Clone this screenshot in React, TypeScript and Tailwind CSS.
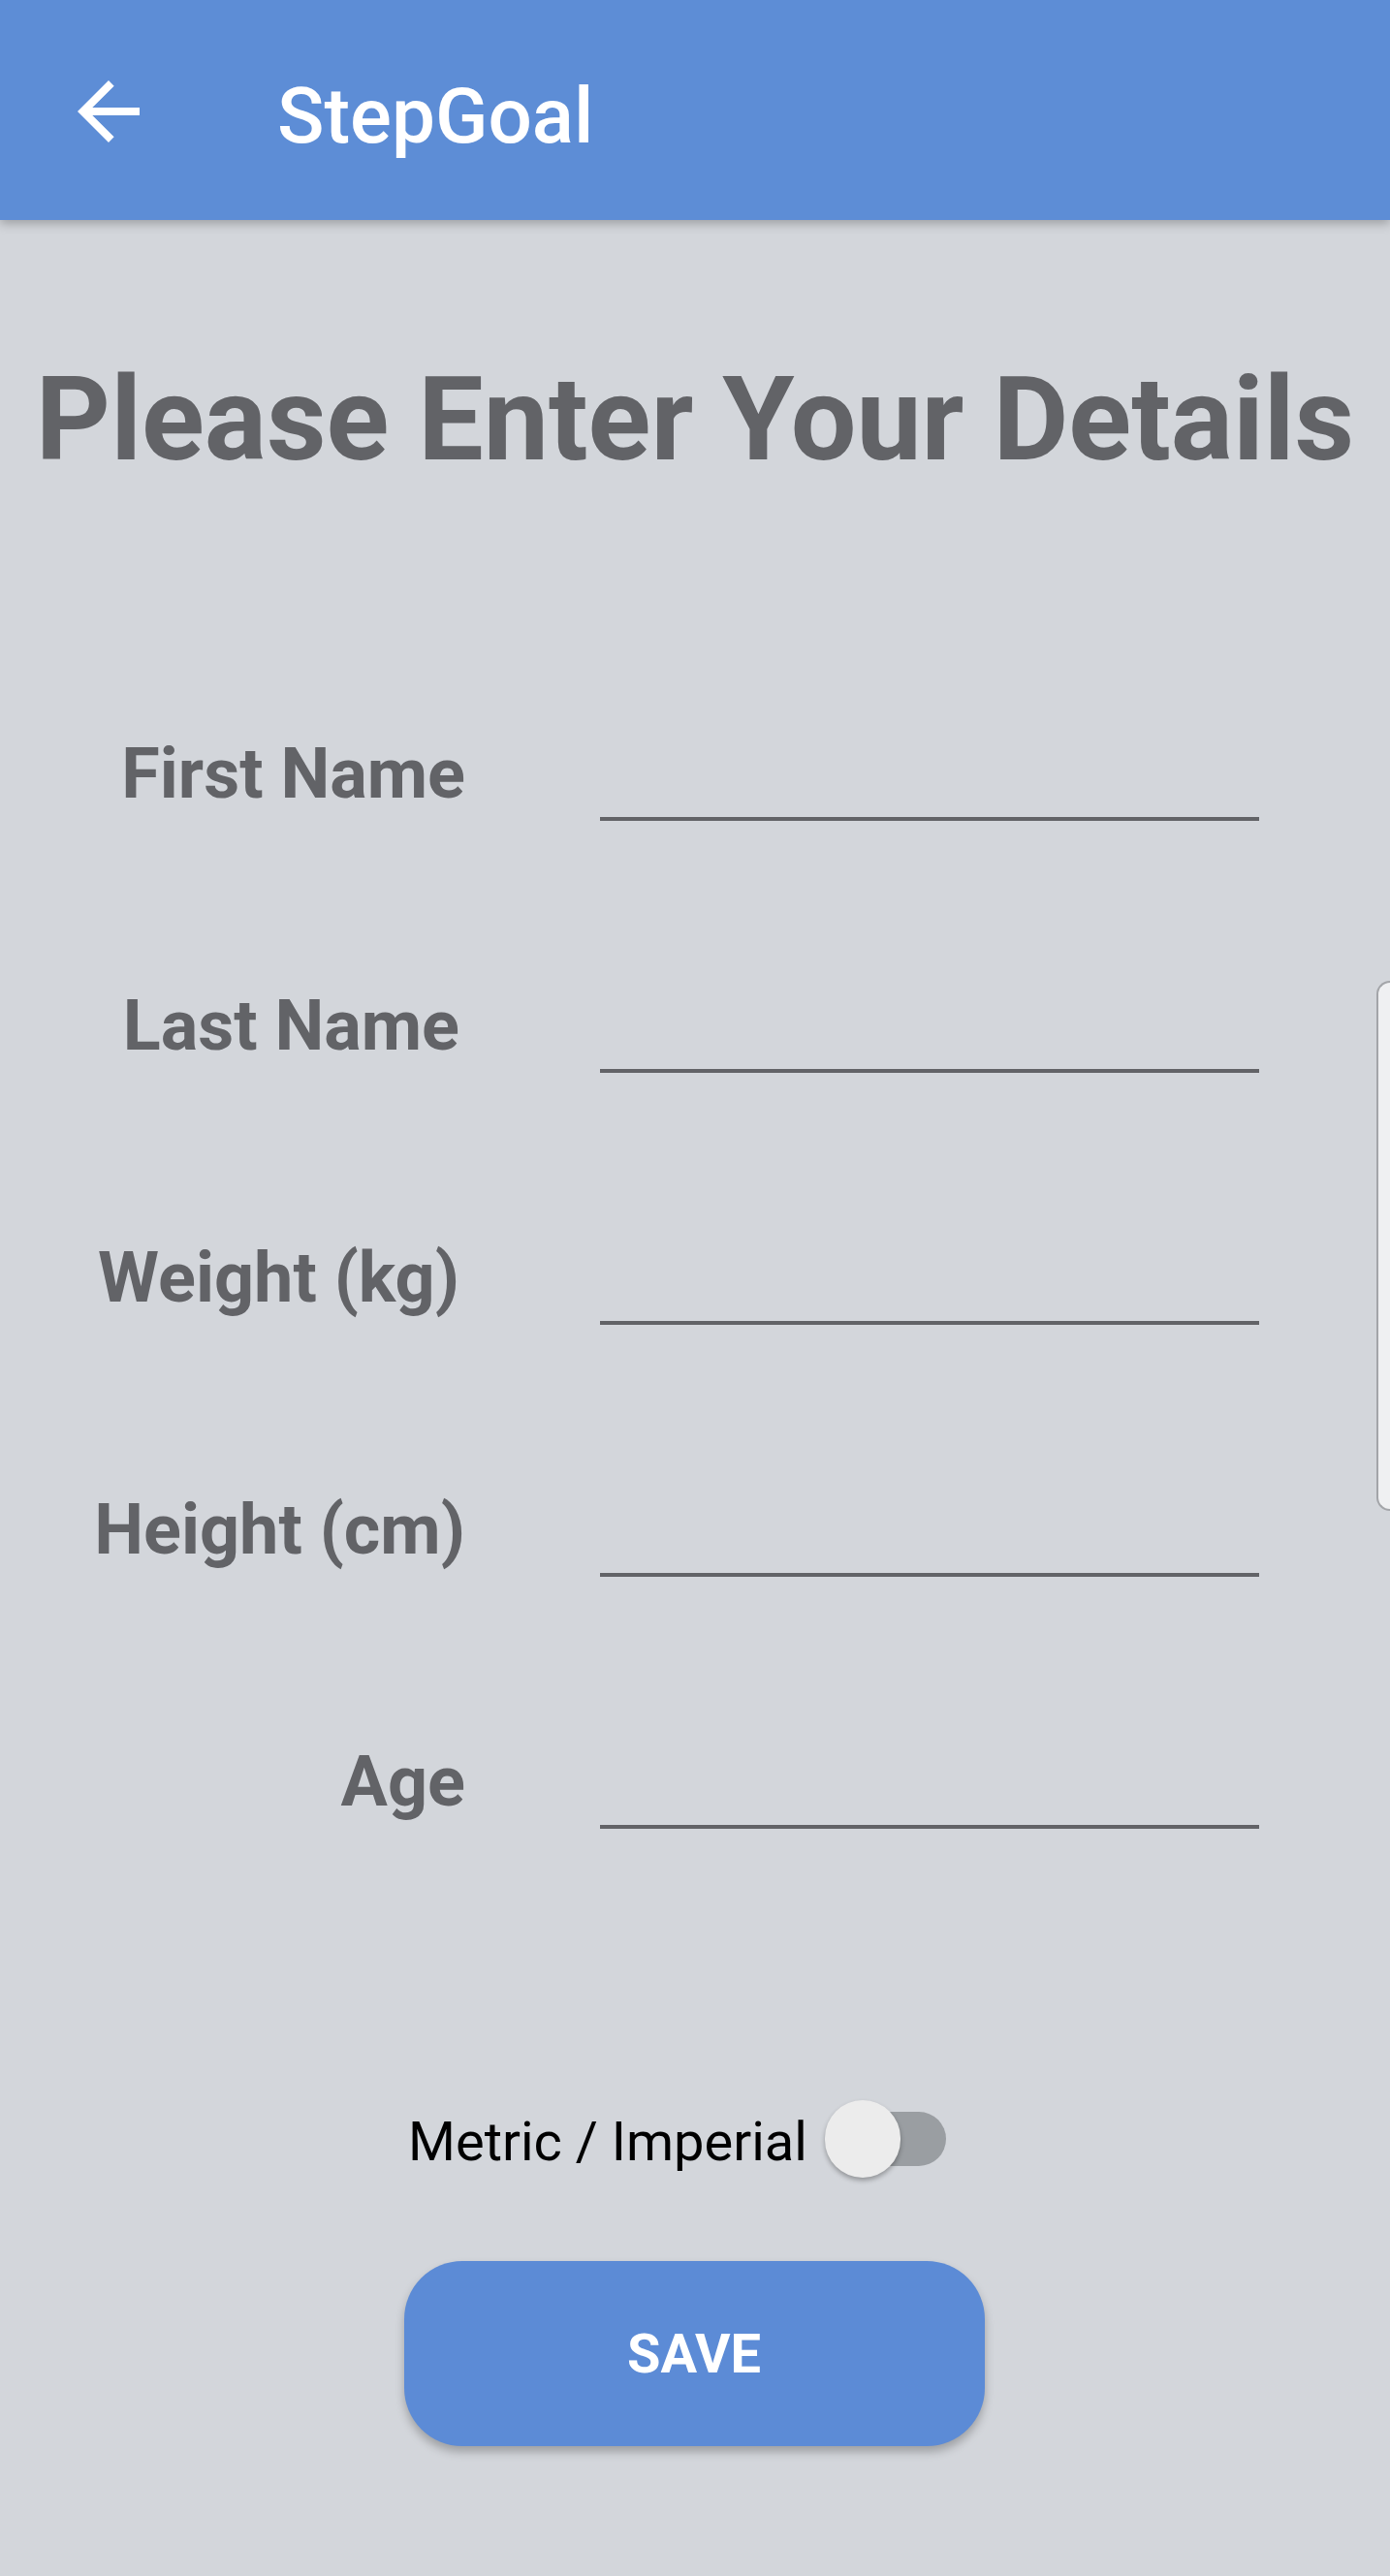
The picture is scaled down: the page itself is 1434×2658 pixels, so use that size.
import React from "react";

const fields = [
  { label: "First Name", pad: "" },
  { label: "Last Name", pad: "pr-[6px]" },
  { label: "Weight (kg)", pad: "pr-[6px]" },
  { label: "Height (cm)", pad: "" },
  { label: "Age", pad: "" },
];

export default function App() {
  return (
    <div
      className="relative min-h-[2658px] w-full bg-[#d3d6db] overflow-hidden"
      style={{ fontFamily: "Roboto, 'Noto Sans', sans-serif" }}
    >
      {/* App bar */}
      <header className="relative z-10 flex h-[227px] items-center bg-[#5d8dd6] shadow-[0_4px_10px_rgba(0,0,0,0.25)]">
        <div className="ml-[64px] mt-[3px] flex h-[96px] w-[96px] items-center justify-center">
          <svg width="96" height="96" viewBox="0 0 24 24" fill="#ffffff">
            <path d="M20 11H7.83l5.59-5.59L12 4l-8 8 8 8 1.41-1.41L7.83 13H20v-2z" />
          </svg>
        </div>
        <h1 className="ml-[126px] mt-[12px] text-[80px] leading-[80px] font-medium text-white">
          StepGoal
        </h1>
      </header>

      {/* Title */}
      <h2 className="mt-[146px] text-center text-[120px] leading-[120px] font-bold text-[#626367]">
        Please Enter Your Details
      </h2>

      {/* Form rows */}
      <div className="mt-[94px] flex flex-col">
        {fields.map((f) => (
          <div key={f.label} className="flex h-[260px] items-end">
            <div className={`mb-[12px] w-[480px] text-right ${f.pad}`}>
              <label className="text-[72px] leading-[72px] font-bold text-[#626367]">{f.label}</label>
            </div>
            <div className="ml-[139px] h-[80px] w-[680px] border-b-4 border-[#626367]" />
          </div>
        ))}
      </div>

      {/* Metric / Imperial switch */}
      <div className="mt-[280px] flex h-[80px] items-center justify-center">
        <span className="mt-[6px] text-[56px] leading-[56px] text-black">Metric / Imperial</span>
        <div className="relative ml-[18px] h-[80px] w-[162px]">
          <div className="absolute left-[14px] top-[12px] h-[56px] w-[111px] rounded-full bg-[#9a9ea2]" />
          <div className="absolute left-0 top-0 h-[80px] w-[78px] rounded-full bg-[#ececec] shadow-[0_3px_5px_rgba(0,0,0,0.3)]" />
        </div>
      </div>

      {/* Save button */}
      <div className="mt-[86px] flex justify-center">
        <button className="ml-[-2px] flex h-[191px] w-[599px] items-center justify-center rounded-[60px] bg-[#5c8bd6] text-[56px] font-bold text-white shadow-[0_6px_10px_rgba(0,0,0,0.25)]">
          SAVE
        </button>
      </div>

      {/* Edge panel handle */}
      <div className="absolute right-0 top-[1012px] h-[547px] w-[14px] rounded-l-[14px] border-2 border-r-0 border-[#a3a5a9] bg-[#eff0f2]" />
    </div>
  );
}
